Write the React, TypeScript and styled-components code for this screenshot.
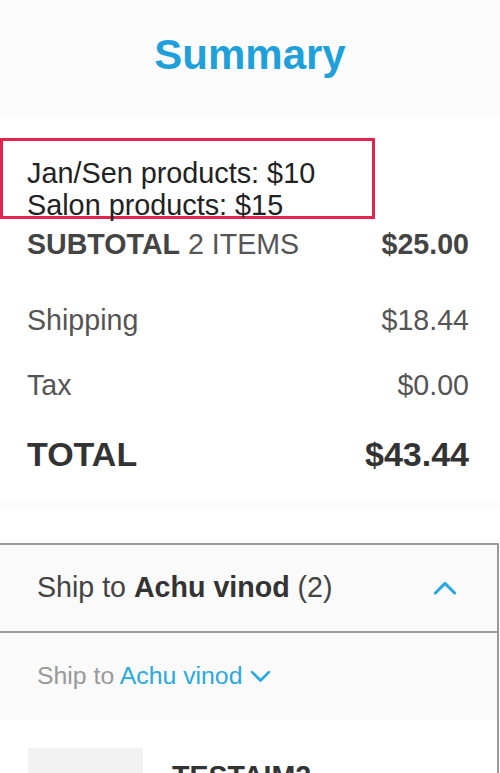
import styled, { createGlobalStyle } from 'styled-components'

const GlobalStyle = createGlobalStyle`
  html, body {
    margin: 0;
    padding: 0;
    background-color: #fcfcfc;
    font-family: "Liberation Sans", Arial, sans-serif;
    overflow: hidden;
  }
`

const Page = styled.div`
  width: 500px;
  height: 773px;
  overflow: hidden;
  background-color: #fcfcfc;
`

const Header = styled.div`
  height: 118px;
  display: flex;
  align-items: center;
  justify-content: center;
`

const Title = styled.h1`
  margin: 0;
  padding-bottom: 8px;
  font-size: 42px;
  font-weight: bold;
  color: #1ea0da;
`

const SummaryCard = styled.div`
  width: 499px;
  background-color: #ffffff;
  padding: 20px 30px 28px 0;
  box-sizing: border-box;
`

const PromoBox = styled.div`
  width: 375px;
  height: 81px;
  box-sizing: border-box;
  border: 3px solid #e5234f;
  padding: 16px 0 0 24px;
  font-size: 28.8px;
  line-height: 32px;
  color: #222;
  white-space: nowrap;
`

const Row = styled.div<{ $top: number; $big?: boolean }>`
  display: flex;
  justify-content: space-between;
  align-items: baseline;
  margin-top: ${props => props.$top}px;
  padding-left: 27px;
  font-size: ${props => (props.$big ? '34px' : '28.6px')};
  line-height: 1.15;
  color: ${props => (props.$big ? '#333' : '#555')};
  font-weight: ${props => (props.$big ? 'bold' : 'normal')};
`

const Strong = styled.span`
  font-weight: bold;
  color: #444;
`

const ShipWrap = styled.div`
  margin-top: 8px;
  padding-top: 33px;
  background-color: #ffffff;
`

const ShipBox = styled.div`
  margin-left: -2px;
  width: 501px;
  box-sizing: border-box;
  border: 2px solid #9a9a9a;
  border-bottom: none;
  background-color: #ffffff;
`

const ShipHeader = styled.div`
  height: 86px;
  display: flex;
  align-items: center;
  justify-content: space-between;
  padding: 0 40px 0 37px;
  background-color: #fafafa;
  border-bottom: 2px solid #9a9a9a;
  font-size: 28.6px;
  color: #444;
`

const ShipName = styled.b`
  color: #333;
`

const SubRow = styled.div`
  height: 87px;
  display: flex;
  align-items: center;
  gap: 8px;
  padding-left: 37px;
  background-color: #fafafa;
  font-size: 24.8px;
  color: #999;
`

const Link = styled.span`
  color: #2aa8e0;
`

const Product = styled.div`
  display: flex;
  gap: 29px;
  padding: 28px 0 0 28px;
  height: 200px;
`

const Thumb = styled.div`
  width: 115px;
  height: 120px;
  background-color: #f2f2f2;
`

const ProductName = styled.div`
  margin-top: 12px;
  font-size: 28.6px;
  font-weight: bold;
  color: #333;
`

const Chevron = ({ up, size }: { up?: boolean; size: number }) => (
  <svg width={size} height={size * 0.6} viewBox="0 0 20 12" fill="none">
    <path
      d={up ? 'M2 10 L10 2 L18 10' : 'M2 2 L10 10 L18 2'}
      stroke="#2aa8e0"
      strokeWidth="2.6"
      strokeLinecap="round"
      strokeLinejoin="round"
    />
  </svg>
)

const App = () => {
  return (
    <Page>
      <GlobalStyle />
      <Header>
        <Title>Summary</Title>
      </Header>
      <SummaryCard>
        <PromoBox>
          Jan/Sen products: $10
          <br />
          Salon products: $15
        </PromoBox>
        <Row $top={9}>
          <span>
            <Strong>SUBTOTAL</Strong> 2 ITEMS
          </span>
          <Strong>$25.00</Strong>
        </Row>
        <Row $top={43}>
          <span>Shipping</span>
          <span>$18.44</span>
        </Row>
        <Row $top={32}>
          <span>Tax</span>
          <span>$0.00</span>
        </Row>
        <Row $top={33} $big>
          <span>TOTAL</span>
          <span>$43.44</span>
        </Row>
      </SummaryCard>
      <ShipWrap>
        <ShipBox>
          <ShipHeader>
            <span>
              Ship to <ShipName>Achu vinod</ShipName> (2)
            </span>
            <Chevron up size={24} />
          </ShipHeader>
          <SubRow>
            <span>
              Ship to <Link>Achu vinod</Link>
            </span>
            <Chevron size={21} />
          </SubRow>
          <Product>
            <Thumb />
            <ProductName>TESTAIM2</ProductName>
          </Product>
        </ShipBox>
      </ShipWrap>
    </Page>
  )
}

export default App
